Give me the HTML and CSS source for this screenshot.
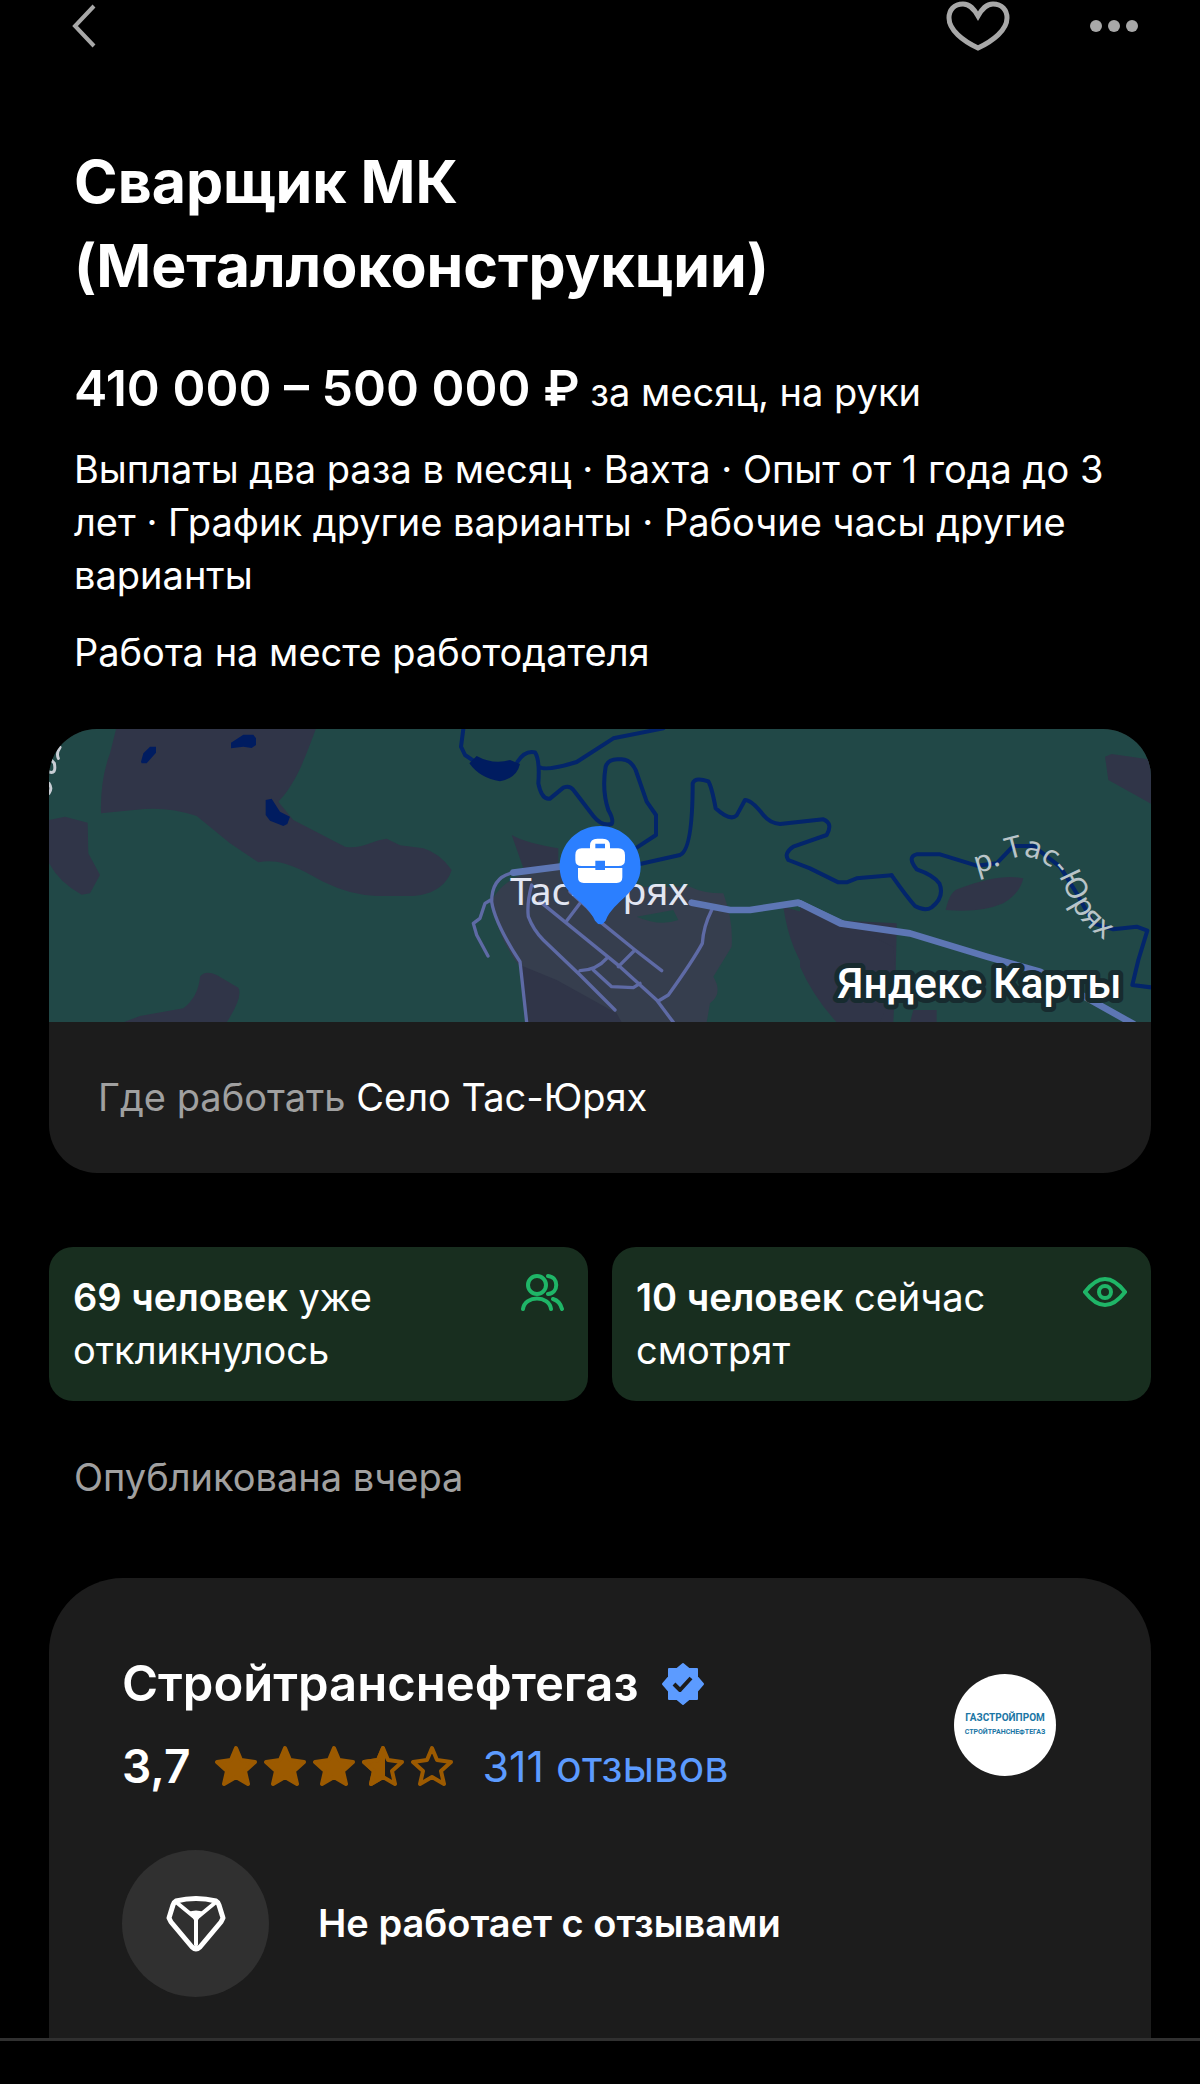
FILE: index.html
```html
<!DOCTYPE html>
<html lang="ru">
<head>
    <meta charset="utf-8">
    <meta name="viewport" content="width=device-width, initial-scale=1">
    <title>Сварщик МК (Металлоконструкции)</title>
    <link rel="stylesheet" href="styles.css">
</head>
<body>
    <header class="topbar">
        <button class="icon-btn" type="button" aria-label="Назад">
            <svg width="24" height="44" viewBox="0 0 24 44"><path d="M22 2L3 22l19 20" stroke-width="4"/></svg>
        </button>
        <div class="topbar-actions">
            <button class="icon-btn" type="button" aria-label="В избранное">
                <svg width="64" height="50" viewBox="0 0 64 50"><path d="M32 15C28 8 24 3 17 3 8 3 3 9 3 17c0 12 14 23 29 30 15-7 29-18 29-30C61 9 56 3 47 3c-7 0-11 5-15 12z" stroke-width="5"/></svg>
            </button>
            <button class="icon-btn" type="button" aria-label="Ещё">
                <svg class="dots" width="48" height="12" viewBox="0 0 48 12"><circle cx="6" cy="6" r="6"/><circle cx="24" cy="6" r="6"/><circle cx="42" cy="6" r="6"/></svg>
            </button>
        </div>
    </header>

    <main class="vacancy">
        <section class="summary">
            <h1>Сварщик МК (Металлоконструкции)</h1>
            <p class="salary"><strong>410 000 – 500 000 ₽</strong> за месяц, на руки</p>
            <p>Выплаты два раза в месяц · Вахта · Опыт от 1 года до 3 лет · График другие варианты · Рабочие часы другие варианты</p>
            <p>Работа на месте работодателя</p>
        </section>

        <section class="place">
            <svg class="map" viewBox="0 0 3306 879" role="img" aria-label="Карта: Тас-Юрях">
                <rect class="forest" width="3306" height="879"/>

                <!-- запад -->
                <g transform="translate(-27 -27)">
                    <path class="land" d="M230 20H830C800 100 770 190 715 245L760 300 915 380C960 390 1000 360 1040 356L1080 376 1150 385Q1200 400 1235 450C1220 500 1170 528 1110 528H1010Q930 525 860 490C800 460 730 410 655 427L570 370 470 288Q380 258 290 269L183 280Q180 180 210 100z"/>
                    <path class="land" d="M27 300L75 290 143 308 145 400 180 465 150 520 125 524Q60 490 27 430zM250 907L300 888 430 865Q475 830 480 770 495 750 530 765L595 803Q610 830 560 907z"/>
                    <path class="lake" d="M303 125L310 100 330 80H348V98L320 130H305zM573 85V68L610 44H640L648 55V75L635 84 610 80zM677 240L695 236 720 275 750 290 742 312 730 318 690 302 677 285z"/>
                    <path class="label-stroke" d="M55 115Q48 100 60 82M25 155Q50 165 43 130L36 122M27 190Q38 205 27 220"/>
                </g>

                <!-- посёлок и река -->
                <g transform="translate(1143 -27)">
                    <path class="land" d="M1060 560L1200 600 1400 610Q1400 700 1390 907H1240Q1190 850 1150 780 1080 700 1060 560z"/>
                    <path class="land" d="M245 345Q290 370 385 385V460L300 500z"/>
                    <path class="town" d="M290 460L390 440 500 500 780 500Q820 520 880 520 910 600 905 680L850 770Q880 820 840 850L830 907H290L270 740Q200 650 185 540 220 480 290 460z"/>
                    <path class="land" d="M270 735L380 780 560 880 575 907H288z"/>
                    <path class="forest" d="M620 590L730 570 745 600Q690 620 620 590z"/>
                    <path class="river" d="M100 27L93 80 105 105 130 122M262 126Q285 90 315 97 330 120 325 190 335 240 360 236L400 203Q420 195 432 212L490 288Q515 320 545 312 552 300 535 270 515 210 527 140 535 115 570 118 600 115 617 150L650 245 678 285V345L620 383M327 140Q345 155 440 126L550 55 700 25M630 432L750 405Q788 390 788 190 795 170 835 184 845 200 857 265 900 305 920 286L945 240Q965 240 1000 285 1020 310 1050 312L1180 298Q1210 310 1190 345L1090 380Q1060 400 1075 420L1140 445 1225 487H1250L1280 475 1385 466"/>
                    <path class="lake" d="M118 130L140 108Q190 135 240 120L270 132Q260 175 210 184 150 175 118 130z"/>
                    <path class="road" d="M250 458Q185 470 185 545 195 610 270 725L290 907M182 540L165 550 150 595 130 610 140 645 174 708M305 495Q290 550 295 590 310 630 340 660L450 765 555 870M330 545L570 740 680 840 730 907M450 550L408 605M420 515L470 560 510 605 615 690 695 752M615 690L565 740M530 715Q500 750 450 752M490 750L545 800 610 803 630 790M845 570Q820 620 817 670 790 720 715 825L685 843"/>
                    <path class="highway" d="M250 458L390 440M785 548L900 570H960L1105 548 1240 612"/>
                    <text class="town-label" x="240" y="556">Тас-Юрях</text>
                </g>

                <!-- восток -->
                <g transform="translate(2253 -27)">
                    <path class="land" d="M915 110L935 102 1060 120V255L925 180zM437 570Q450 510 480 505 600 460 670 475 660 520 610 550 540 580 437 570z"/>
                    <path class="land" d="M0 560L120 600 280 680 290 790 240 907H110Q40 830 0 740zM330 907L340 870H410V907z"/>
                    <path class="river" d="M275 466Q320 530 345 558 375 575 395 562 435 530 418 490 400 465 350 448 320 410 350 403H420L530 437 590 430 640 378H700L780 440 830 520 880 610 940 628 1010 620 1042 632 1015 720 997 795 1060 803"/>
                    <path class="highway" d="M0 550L120 610 330 640 560 710 720 755 1000 912"/>
                    <path id="river-label" class="guide" d="M530 458C600 450 620 405 680 410 760 425 785 480 810 540 830 590 860 630 960 690"/>
                    <text class="river-name"><textPath href="#river-label">р. Тас-Юрях</textPath></text>
                    <text class="map-brand" x="965" y="835">Яндекс Карты</text>
                </g>

                <!-- метка -->
                <g transform="translate(1143 -27)">
                    <path class="pin" d="M510 318C443 318 389 372 389 440 389 525 470 540 495 602Q511 624 527 602C550 540 632 520 632 440 632 372 578 318 510 318z"/>
                    <path class="pin-icon" d="M480 385V377Q480 356 502 356H518Q540 356 540 377V385H565Q585 385 585 405V420Q585 438 565 438H525V422H496V438H455Q436 438 436 420V405Q436 385 455 385zM496 385H525V371H496zM444 444H496V450H525V444H577V472Q577 489 560 489H461Q444 489 444 472z"/>
                </g>
            </svg>
            <p class="place-info"><span>Где работать</span> Село Тас-Юрях</p>
        </section>

        <section class="stats">
            <div class="stat">
                <p><strong>69 человек</strong> уже откликнулось</p>
                <svg width="44" height="38" viewBox="0 0 44 38"><circle cx="17" cy="12" r="9"/><path d="M3 36C5 22 29 22 31 36M28 3c11 1 11 17 0 18M33 26q7 2 9 10"/></svg>
            </div>
            <div class="stat">
                <p><strong>10 человек</strong> сейчас смотрят</p>
                <svg width="44" height="38" viewBox="0 0 44 38"><path d="M2 19Q22-7 42 19 22 45 2 19z"/><circle cx="22" cy="19" r="6"/></svg>
            </div>
        </section>

        <p class="published">Опубликована вчера</p>

        <section class="employer">
            <div class="employer-head">
                <div>
                    <h2>Стройтранснефтегаз
                        <svg class="badge" width="44" height="44" viewBox="0 0 44 44"><path d="M22 2l6 5h8v8l6 7-6 7v8h-8l-6 5-6-5H8v-8l-6-7 6-7V7h8z"/><path class="tick" d="M13 22l6 6 11-12"/></svg>
                    </h2>
                    <div class="rating">
                        <strong>3,7</strong>
                        <svg class="stars" width="244" height="44" viewBox="0 0 244 44" role="img" aria-label="3,7 из 5">
                            <defs>
                                <path id="star" d="M22 4l5 12 14 2-10 9 3 13-12-7-12 7 3-13L3 18l14-2z"/>
                                <path id="star-half" d="M22 4v29l-12 7 3-13L3 18l14-2z"/>
                            </defs>
                            <use class="full" href="#star"/>
                            <use class="full" href="#star" x="49"/>
                            <use class="full" href="#star" x="98"/>
                            <use class="full" href="#star-half" x="147"/>
                            <use href="#star" x="147"/>
                            <use href="#star" x="196"/>
                        </svg>
                        <a href="#reviews">311 отзывов</a>
                    </div>
                </div>
                <div class="logo"><span>ГАЗСТРОЙПРОМ</span><small>СТРОЙТРАНСНЕФТЕГАЗ</small></div>
            </div>
            <div class="feature">
                <div class="feature-icon">
                    <svg width="60" height="58" viewBox="0 0 60 58">
                        <path d="M10 6Q30 1 50 6 52 7 53 10L57 23 55 27 34 52Q30 56 26 52L5 27 3 23 7 10Q8 7 10 6z"/>
                        <path d="M10 7l17 14h6L50 7" stroke-width="4"/>
                        <path class="wedge" d="M22 17Q30 14 38 17L32 25V50L30 53 28 50V25z"/>
                    </svg>
                </div>
                <p>Не работает с отзывами</p>
            </div>
        </section>
    </main>

    <footer class="bottom-bar"></footer>
</body>
</html>
```

FILE: styles.css
```css
* {
    box-sizing: border-box;
}

body {
    margin: 0;
    background: #000;
    color: #fff;
    font-family: Inter, "Noto Sans", sans-serif;
    font-size: 38px;
    line-height: 53px;
}

h1, h2, p {
    margin: 0;
}

svg {
    display: block;
    flex-shrink: 0;
}

.topbar {
    display: flex;
    justify-content: space-between;
    align-items: center;
    height: 52px;
    padding: 0 62px 0 72px;
}

.topbar-actions {
    display: flex;
    align-items: center;
    gap: 80px;
}

.icon-btn {
    padding: 0;
    border: none;
    background: none;
    cursor: pointer;
}

.icon-btn svg {
    fill: none;
    stroke: #a8a8a8;
}

.icon-btn .dots {
    fill: #a8a8a8;
    stroke: none;
}

.vacancy {
    padding: 88px 49px 0;
}

.summary {
    display: flex;
    flex-direction: column;
    gap: 24px;
    padding: 0 25px;
}

h1 {
    margin-bottom: 30px;
    font-size: 59px;
    line-height: 84px;
    font-weight: 700;
}

.salary strong {
    font-size: 50px;
    line-height: 52px;
    font-weight: 600;
}

.place {
    margin-top: 50px;
    border-radius: 48px;
    overflow: hidden;
    background: #1c1c1c;
}

.place-info {
    padding: 49px;
}

.place-info span {
    color: #a0a0a0;
}

.map {
    width: 100%;
    height: auto;
}

.map path {
    stroke-linejoin: round;
    stroke-linecap: round;
}

.map .forest {
    fill: #214847;
}

.map .land {
    fill: #303548;
}

.map .town {
    fill: #363e4e;
}

.map .lake {
    fill: #001c60;
}

.map .river {
    fill: none;
    stroke: #03256b;
    stroke-width: 12;
}

.map .road {
    fill: none;
    stroke: #5e6aa5;
    stroke-width: 10;
}

.map .highway {
    fill: none;
    stroke: #5d76b4;
    stroke-width: 20;
}

.map .guide {
    fill: none;
}

.map .label-stroke {
    fill: none;
    stroke: #c8cdd4;
    stroke-width: 9;
}

.map text {
    font-family: "Noto Sans", sans-serif;
}

.town-label {
    fill: #e2e6f2;
    font-size: 117px;
}

.river-name {
    fill: #b9c4c8;
    font-size: 90px;
}

.map .map-brand {
    fill: #fff;
    stroke: #172b2f;
    stroke-width: 30;
    stroke-linejoin: round;
    paint-order: stroke;
    font-family: Roboto, sans-serif;
    font-size: 128px;
    font-weight: 500;
    text-anchor: end;
}

.pin {
    fill: #2b7fff;
}

.pin-icon {
    fill: #fff;
    fill-rule: evenodd;
}

.stats {
    display: grid;
    grid-template-columns: 1fr 1fr;
    gap: 24px;
    margin-top: 74px;
}

.stat {
    display: flex;
    justify-content: space-between;
    padding: 24px;
    border-radius: 24px;
    background: #182e1f;
}

.stat p {
    max-width: 380px;
}

.stat strong {
    font-weight: 600;
}

.stat svg {
    margin-top: 2px;
    fill: none;
    stroke: #1fb567;
    stroke-width: 4;
    stroke-linecap: round;
}

.published {
    margin: 50px 25px 0;
    color: #a0a0a0;
}

.employer {
    margin-top: 74px;
    padding: 74px 73px 41px;
    border-radius: 74px 74px 0 0;
    background: #1c1c1c;
}

.employer-head {
    display: flex;
    justify-content: space-between;
    align-items: center;
    padding-right: 22px;
}

h2 {
    display: flex;
    align-items: center;
    gap: 22px;
    font-size: 49px;
    line-height: 64px;
    font-weight: 600;
}

.badge {
    fill: #5c9bff;
    stroke: #5c9bff;
    stroke-width: 2;
    stroke-linejoin: round;
}

.badge .tick {
    fill: none;
    stroke: #1c1c1c;
    stroke-width: 4;
}

.rating {
    display: flex;
    align-items: center;
    gap: 24px;
    margin-top: 18px;
    font-size: 43px;
    line-height: 64px;
}

.rating strong {
    font-size: 46px;
    font-weight: 600;
}

.rating a {
    color: #5c9bff;
    text-decoration: none;
}

.stars {
    fill: none;
    stroke: #9c5a00;
    stroke-width: 4;
    stroke-linejoin: round;
}

.stars .full {
    fill: #9c5a00;
}

.logo {
    display: flex;
    flex-direction: column;
    align-items: center;
    justify-content: center;
    width: 102px;
    height: 102px;
    border-radius: 50%;
    background: #fff;
    color: #1b76a5;
    font-family: Roboto, sans-serif;
    font-size: 10px;
    line-height: 14px;
    font-weight: 700;
}

.logo small {
    font-size: 7px;
}

.feature {
    display: flex;
    align-items: center;
    gap: 49px;
    margin-top: 52px;
    font-weight: 600;
}

.feature-icon {
    display: flex;
    align-items: center;
    justify-content: center;
    width: 147px;
    height: 147px;
    border-radius: 50%;
    background: #303030;
}

.feature-icon svg {
    fill: none;
    stroke: #fff;
    stroke-width: 5;
    stroke-linejoin: round;
}

.feature-icon .wedge {
    fill: #fff;
    stroke: none;
}

.bottom-bar {
    height: 44px;
    border-top: 3px solid #303030;
}
```
